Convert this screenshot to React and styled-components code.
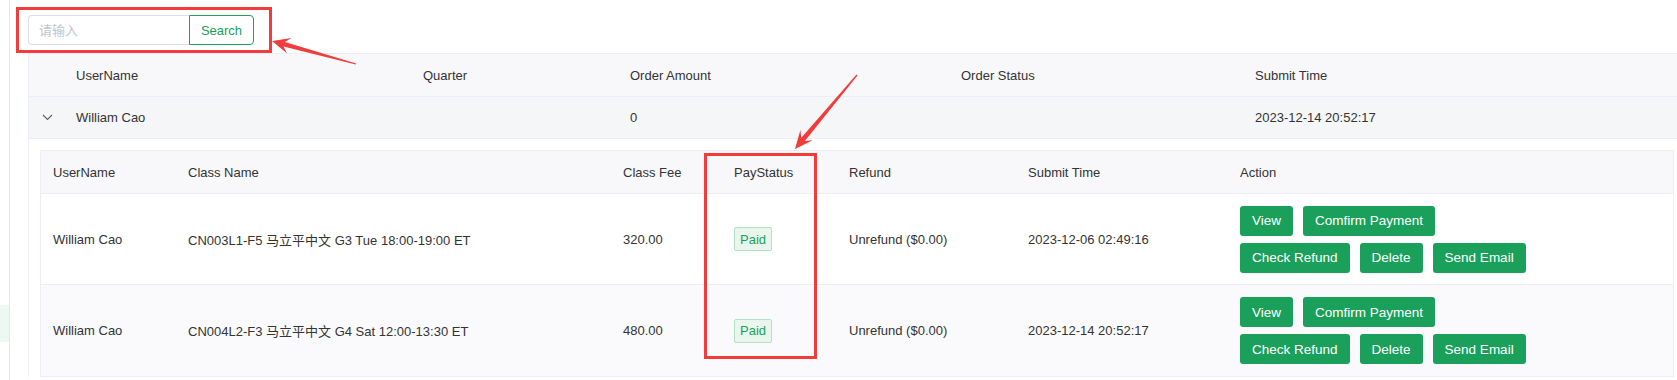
import React from "react";
import styled, { createGlobalStyle } from "styled-components";

const GlobalStyle = createGlobalStyle`
  html, body { margin: 0; padding: 0; background: #ffffff; overflow: hidden; }
  body {
    font-family: "Liberation Sans", Arial, "Noto Sans CJK SC", sans-serif;
    font-size: 13px;
    color: #333333;
  }
  * { box-sizing: border-box; }
`;

const GREEN = "#1aa05b";
const LINE = "#ebeef5";
const RED = "#f23b3b";

const Page = styled.div`
  position: relative;
  display: flex;
  width: 1677px;
  height: 380px;
  overflow: hidden;
  background: #fff;
`;

const Sidebar = styled.aside`
  flex: 0 0 10px;
  border-right: 1px solid #e8e8ec;
  padding-top: 305px;
`;

const MenuItem = styled.div`
  height: 37px;
  background: ${(p) => (p.$active ? "#eef8f2" : "transparent")};
`;

const Main = styled.main`
  flex: 1;
  min-width: 0;
  padding: 15px 0 0 18px;
`;

const SearchBar = styled.div`
  display: flex;
  height: 30px;
`;

const SearchInput = styled.input`
  width: 161px;
  height: 30px;
  border: 1px solid #dcdfe6;
  border-right: none;
  border-radius: 4px 0 0 4px;
  padding: 0 10px;
  font: inherit;
  font-size: 13px;
  color: #333;
  outline: none;
  &::placeholder { color: #c0c4cc; }
`;

const SearchButton = styled.button`
  width: 65px;
  height: 30px;
  border: 1px solid ${GREEN};
  border-radius: 0 4px 4px 0;
  background: #fff;
  color: ${GREEN};
  font: inherit;
  font-size: 13px;
  padding: 0;
`;

const OuterTable = styled.div`
  margin-top: 8px;
  width: 1658px;
  border-top: 1px solid ${LINE};
  border-left: 1px solid ${LINE};
`;

const OuterRow = styled.div`
  display: grid;
  grid-template-columns: 35px 347px 207px 331px 294px 1fr;
  align-items: center;
  height: ${(p) => (p.$head ? "43px" : "42px")};
  background: ${(p) => (p.$head ? "#f8f8fa" : "#f5f6f8")};
  border-bottom: 1px solid ${LINE};
`;

const Cell = styled.div`
  padding: 0 12px;
  white-space: nowrap;
  color: #333;
`;

const ExpandCell = styled.div`
  display: flex;
  align-items: center;
  justify-content: center;
  padding-left: 2px;
`;

const ExpandPanel = styled.div`
  padding: 11px 12px 0 11px;
`;

const InnerTable = styled.div`
  border: 1px solid ${LINE};
`;

const InnerRow = styled.div`
  display: grid;
  grid-template-columns: 135px 435px 111px 115px 179px 212px 1fr;
  align-items: center;
  height: ${(p) => (p.$head ? "43px" : "91px")};
  background: ${(p) => (p.$head ? "#f8f8fa" : p.$stripe ? "#fafafc" : "#ffffff")};
  border-bottom: ${(p) => (p.$last ? "none" : `1px solid ${LINE}`)};
`;

const Tag = styled.span`
  display: inline-flex;
  align-items: center;
  height: 24px;
  padding: 0 5px;
  border: 1px solid #b3e0c6;
  border-radius: 2px;
  background: #e8f6ee;
  color: ${GREEN};
  font-size: 13px;
`;

const ActionGroup = styled.div`
  display: flex;
  flex-direction: column;
  gap: 7px;
`;

const ButtonLine = styled.div`
  display: flex;
  gap: 10px;
`;

const ActionButton = styled.button`
  height: 30px;
  padding: 0 12px;
  border: none;
  border-radius: 3px;
  background: ${GREEN};
  color: #fff;
  font: inherit;
  font-size: 13.5px;
  white-space: nowrap;
`;

const Overlay = styled.svg`
  position: absolute;
  left: 0;
  top: 0;
  pointer-events: none;
`;

function arrowPoints(tx, ty, px, py) {
  const head = 18;
  const half = 8;
  const neck = 0.7;
  const shaft = 2.4;
  const tail = 0.6;
  const dx = px - tx;
  const dy = py - ty;
  const len = Math.hypot(dx, dy);
  const ux = dx / len;
  const uy = dy / len;
  const nx = -uy;
  const ny = ux;
  const bx = px - ux * head;
  const by = py - uy * head;
  const kx = px - ux * head * neck;
  const ky = py - uy * head * neck;
  const pts = [
    [tx + nx * tail, ty + ny * tail],
    [kx + nx * shaft, ky + ny * shaft],
    [bx + nx * half, by + ny * half],
    [px, py],
    [bx - nx * half, by - ny * half],
    [kx - nx * shaft, ky - ny * shaft],
    [tx - nx * tail, ty - ny * tail],
  ];
  return pts.map((p) => p.map((v) => v.toFixed(1)).join(",")).join(" ");
}

const Chevron = () => (
  <svg width="11" height="7" viewBox="0 0 11 7">
    <path d="M1 1 L5.5 5.5 L10 1" fill="none" stroke="#606266" strokeWidth="1.2" />
  </svg>
);

const orders = [
  {
    user: "William Cao",
    cls: "CN003L1-F5 马立平中文 G3 Tue 18:00-19:00 ET",
    fee: "320.00",
    refund: "Unrefund ($0.00)",
    time: "2023-12-06 02:49:16",
  },
  {
    user: "William Cao",
    cls: "CN004L2-F3 马立平中文 G4 Sat 12:00-13:30 ET",
    fee: "480.00",
    refund: "Unrefund ($0.00)",
    time: "2023-12-14 20:52:17",
  },
];

export default function App() {
  return (
    <>
      <GlobalStyle />
      <Page>
        <Sidebar>
          <MenuItem $active />
        </Sidebar>
        <Main>
          <SearchBar>
            <SearchInput placeholder="请输入" />
            <SearchButton>Search</SearchButton>
          </SearchBar>
          <OuterTable>
            <OuterRow $head>
              <div />
              <Cell>UserName</Cell>
              <Cell>Quarter</Cell>
              <Cell>Order Amount</Cell>
              <Cell>Order Status</Cell>
              <Cell>Submit Time</Cell>
            </OuterRow>
            <OuterRow>
              <ExpandCell>
                <Chevron />
              </ExpandCell>
              <Cell>William Cao</Cell>
              <Cell />
              <Cell>0</Cell>
              <Cell />
              <Cell>2023-12-14 20:52:17</Cell>
            </OuterRow>
            <ExpandPanel>
              <InnerTable>
                <InnerRow $head>
                  <Cell>UserName</Cell>
                  <Cell>Class Name</Cell>
                  <Cell>Class Fee</Cell>
                  <Cell>PayStatus</Cell>
                  <Cell>Refund</Cell>
                  <Cell>Submit Time</Cell>
                  <Cell>Action</Cell>
                </InnerRow>
                {orders.map((o, i) => (
                  <InnerRow key={i} $stripe={i % 2 === 1} $last={i === orders.length - 1}>
                    <Cell>{o.user}</Cell>
                    <Cell>{o.cls}</Cell>
                    <Cell>{o.fee}</Cell>
                    <Cell>
                      <Tag>Paid</Tag>
                    </Cell>
                    <Cell>{o.refund}</Cell>
                    <Cell>{o.time}</Cell>
                    <Cell>
                      <ActionGroup>
                        <ButtonLine>
                          <ActionButton>View</ActionButton>
                          <ActionButton>Comfirm Payment</ActionButton>
                        </ButtonLine>
                        <ButtonLine>
                          <ActionButton>Check Refund</ActionButton>
                          <ActionButton>Delete</ActionButton>
                          <ActionButton>Send Email</ActionButton>
                        </ButtonLine>
                      </ActionGroup>
                    </Cell>
                  </InnerRow>
                ))}
              </InnerTable>
            </ExpandPanel>
          </OuterTable>
        </Main>
        <Overlay width="1677" height="380" viewBox="0 0 1677 380">
          <rect x="17.5" y="8.5" width="253" height="43" fill="none" stroke={RED} strokeWidth="3" />
          <rect x="705.5" y="154.5" width="110" height="203" fill="none" stroke={RED} strokeWidth="3" />
          <polygon points={arrowPoints(356, 64, 272, 41)} fill={RED} />
          <polygon points={arrowPoints(857, 75, 795, 149)} fill={RED} />
        </Overlay>
      </Page>
    </>
  );
}
